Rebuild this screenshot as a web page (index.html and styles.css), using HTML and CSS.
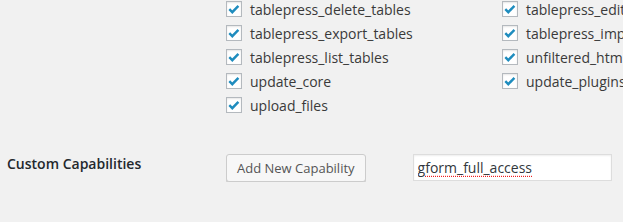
FILE: index.html
```html
<!DOCTYPE html>
<html lang="en">
<head>
    <meta charset="UTF-8">
    <title>Role capabilities</title>
    <link rel="stylesheet" href="styles.css">
</head>
<body>
    <div class="caps">
        <label class="cap"><span class="box"><svg viewBox="0 0 14 14"><path d="M2.3 7.2 L5.3 10.2 L11.4 3.8" /></svg></span>tablepress_delete_tables</label>
        <label class="cap"><span class="box"><svg viewBox="0 0 14 14"><path d="M2.3 7.2 L5.3 10.2 L11.4 3.8" /></svg></span>tablepress_edit_tables</label>
        <label class="cap"><span class="box"><svg viewBox="0 0 14 14"><path d="M2.3 7.2 L5.3 10.2 L11.4 3.8" /></svg></span>tablepress_export_tables</label>
        <label class="cap"><span class="box"><svg viewBox="0 0 14 14"><path d="M2.3 7.2 L5.3 10.2 L11.4 3.8" /></svg></span>tablepress_import_tables</label>
        <label class="cap"><span class="box"><svg viewBox="0 0 14 14"><path d="M2.3 7.2 L5.3 10.2 L11.4 3.8" /></svg></span>tablepress_list_tables</label>
        <label class="cap"><span class="box"><svg viewBox="0 0 14 14"><path d="M2.3 7.2 L5.3 10.2 L11.4 3.8" /></svg></span>unfiltered_html</label>
        <label class="cap"><span class="box"><svg viewBox="0 0 14 14"><path d="M2.3 7.2 L5.3 10.2 L11.4 3.8" /></svg></span>update_core</label>
        <label class="cap"><span class="box"><svg viewBox="0 0 14 14"><path d="M2.3 7.2 L5.3 10.2 L11.4 3.8" /></svg></span>update_plugins</label>
        <label class="cap"><span class="box"><svg viewBox="0 0 14 14"><path d="M2.3 7.2 L5.3 10.2 L11.4 3.8" /></svg></span>upload_files</label>
    </div>

    <div class="custom-row">
        <div class="row-label">Custom Capabilities</div>
        <button class="button">Add New Capability</button>
        <input type="text" class="cap-input" value="gform_full_access">
    </div>
</body>
</html>
```

FILE: styles.css
```css
body { margin: 0; background: #f1f1f1; color: #3a3a3a; font-family: "Open Sans", "Liberation Sans", sans-serif; font-size: 14px; overflow: hidden; }

.caps { display: grid; grid-template-columns: 276px 276px; grid-auto-rows: 24px; margin-top: -2px; padding-left: 226px; }
.cap { display: flex; align-items: center; gap: 8px; white-space: nowrap; line-height: 24px; }
.box { flex: none; width: 14px; height: 14px; margin-top: -2px; border: 1px solid #b4b9be; background: #fff; box-shadow: inset 0 1px 2px rgba(0, 0, 0, 0.1); display: flex; }
.box svg { width: 14px; height: 14px; }
.box path { fill: none; stroke: #1e8cbe; stroke-width: 2.4; }

.custom-row { display: flex; align-items: flex-start; padding-top: 36px; }
.row-label { width: 219px; padding-left: 7px; font-weight: 600; color: #23282d; line-height: 20px; margin-top: 0; }
.button { height: 28px; padding: 0 10px 1px; font-family: inherit; font-size: 13px; line-height: 26px; color: #555; background: #f7f7f7; border: 1px solid #ccc; border-radius: 3px; box-shadow: 0 1px 0 #ccc; }
.cap-input { margin-left: 47px; width: 199px; height: 27px; box-sizing: border-box; padding: 2px 4px; font-family: inherit; font-size: 14px; color: #32373c; background: #fff; border: 1px solid #ddd; box-shadow: inset 0 1px 2px rgba(0, 0, 0, 0.07); outline: none; text-decoration: underline dotted #e22; text-underline-offset: 3px; }
```
